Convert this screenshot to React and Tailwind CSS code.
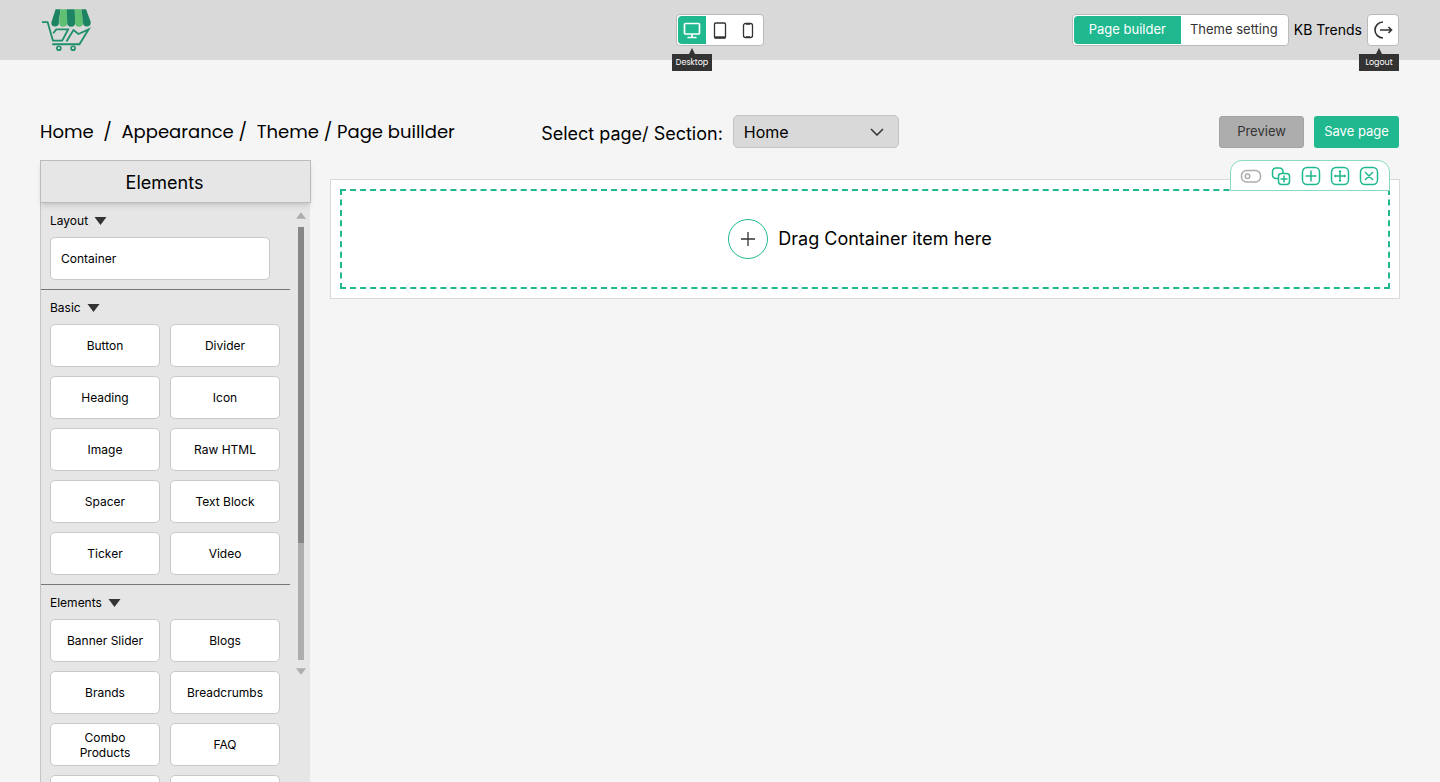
import React, { useState } from 'react';
import clsx from 'clsx';

const sections = [
  {
    title: 'Basic',
    items: ['Button', 'Divider', 'Heading', 'Icon', 'Image', 'Raw HTML', 'Spacer', 'Text Block', 'Ticker', 'Video'],
  },
  {
    title: 'Elements',
    items: ['Banner Slider', 'Blogs', 'Brands', 'Breadcrumbs', 'Combo Products', 'FAQ', '', ''],
  },
];

const scroll = { track: 76, thumb: 73 };

function Logo() {
  return (
    <svg viewBox="34 24 154 132" className="h-11 w-[51px]" fill="none" aria-label="Store logo">
      <path d="M78 27h15l-5 38v3a11.500 11.500 0 0 1-23 0z" fill="#1c8463" />
      <path d="M93 27h20v41a12 12 0 0 1-24 0v-3z" fill="#5fbf73" />
      <path d="M112 27h24l1 41a12 12 0 0 1-24 0z" fill="#1c8463" />
      <path d="M136 27h20l5 38v3a12 12 0 0 1-24 0z" fill="#5fbf73" />
      <path d="M156 27h14l14 38v3a11.500 11.500 0 0 1-23 0z" fill="#1c8463" />
      <path
        d="M37 66h17l16 56h28l18-34H80l-9 12M111 125l21-35 15 12 31-14-28 45H68"
        stroke="#1f8f6c"
        strokeWidth="5.500"
      />
      <circle cx="88" cy="145" r="6" stroke="#1f8f6c" strokeWidth="5" />
      <circle cx="131" cy="145" r="6" stroke="#1f8f6c" strokeWidth="5" />
    </svg>
  );
}

function DesktopIcon() {
  return (
    <svg viewBox="0 0 18 18" className="size-[18px]" fill="none" stroke="currentColor" strokeWidth="1.700">
      <rect x="1.500" y="2.500" width="15" height="10.500" rx="1" />
      <path d="M9 13v3.500M4.500 16.500h9" />
    </svg>
  );
}

function TabletIcon() {
  return (
    <svg viewBox="0 0 18 18" className="size-[18px]" fill="none" stroke="currentColor">
      <rect x="3.500" y="2" width="11" height="15" rx="1" strokeWidth="1.300" />
      <path d="M3.500 16.300h11" strokeWidth="2" />
    </svg>
  );
}

function PhoneIcon() {
  return (
    <svg viewBox="0 0 18 18" className="size-[18px]" fill="none" stroke="currentColor" strokeWidth="1.300">
      <rect x="4.500" y="2.500" width="9" height="14" rx="2" />
      <path d="M7 3h4M7 16h4" strokeWidth="1.600" />
    </svg>
  );
}

function LogoutIcon() {
  return (
    <svg viewBox="0 0 20 20" className="size-5" fill="none" stroke="currentColor" strokeWidth="1.600">
      <path d="M10 2a8 8 0 0 0 0 16" />
      <path d="M7 10h11.500M15.500 7l3 3-3 3" />
    </svg>
  );
}

function Tooltip({ children, className }) {
  return (
    <span
      role="tooltip"
      className={clsx('absolute z-10 flex flex-col items-center font-[Poppins,Inter,sans-serif] text-[8px] leading-[17px] text-white', className)}
    >
      <svg viewBox="0 0 6 6" className="size-[6px]" fill="#333">
        <path d="M3 0l3 6H0z" />
      </svg>
      <span className="h-[17px] w-10 bg-[#333] text-center">{children}</span>
    </span>
  );
}

const devices = [
  { id: 'Desktop', Icon: DesktopIcon },
  { id: 'Tablet', Icon: TabletIcon },
  { id: 'Mobile', Icon: PhoneIcon },
];

function Header() {
  const [device, setDevice] = useState('Desktop');

  return (
    <header className="grid h-15 shrink-0 grid-cols-[1fr_auto_1fr] items-center bg-[#d9d9d9] px-10">
      <a href="#" className="ml-px justify-self-start">
        <Logo />
      </a>

      <div className="relative flex h-8 items-center rounded border border-[#bbb] bg-white px-px">
        {devices.map(({ id, Icon }) => (
          <button
            key={id}
            aria-label={id}
            onClick={() => setDevice(id)}
            className={clsx(
              'flex h-7 w-7 items-center justify-center',
              device === id ? 'rounded-l bg-[#1fb88f] text-white' : 'text-[#333]'
            )}
          >
            <Icon />
          </button>
        ))}
        <Tooltip className="-left-[5px] top-[33px]">Desktop</Tooltip>
      </div>

      <div className="mr-px flex items-center gap-[5px] justify-self-end">
        <div className="flex h-8 items-center rounded border border-[#bbb] bg-white px-px text-[13px]">
          <button className="h-7 w-[107px] rounded-l bg-[#1fb88f] text-white">Page builder</button>
          <button className="h-7 w-[106px] text-[#333]">Theme setting</button>
        </div>
        <span className="text-sm">KB Trends</span>
        <div className="relative">
          <button
            aria-label="Log out"
            className="flex size-8 items-center justify-center rounded border border-[#bbb] bg-white text-[#333]"
          >
            <LogoutIcon />
          </button>
          <Tooltip className="right-0 top-[34px]">Logout</Tooltip>
        </div>
      </div>
    </header>
  );
}

function PageBar() {
  return (
    <div className="grid grid-cols-[1fr_auto_1fr] items-center">
      <nav className="font-[Poppins,Inter,sans-serif] text-lg whitespace-pre">
        <a href="#">Home</a>
        {'  /  '}
        <a href="#">Appearance</a>
        {' /  '}
        <a href="#">Theme</a>
        {' / '}
        <a href="#">Page buillder</a>
      </nav>

      <div className="flex items-center gap-[10px]">
        <label htmlFor="page" className="pt-1 text-lg">
          Select page/ Section:
        </label>
        <div className="relative">
          <select
            id="page"
            className="h-[33px] w-[166px] appearance-none rounded-[5px] border border-[#c4c4c4] bg-[#d9d9d9] px-[10px] text-base"
          >
            <option>Home</option>
          </select>
          <svg
            viewBox="0 0 14 8"
            className="pointer-events-none absolute top-[13px] right-[15px] h-2 w-[14px]"
            fill="none"
            stroke="#333"
            strokeWidth="1.500"
          >
            <path d="M1 1l6 6 6-6" />
          </svg>
        </div>
      </div>

      <div className="mr-px flex gap-[10px] justify-self-end text-[13px]">
        <button className="h-8 w-[85px] rounded-[3px] border border-[#a3a3a3] bg-[#adadad] text-[#333]">Preview</button>
        <button className="h-8 w-[85px] rounded-[3px] bg-[#1fb88f] text-white">Save page</button>
      </div>
    </div>
  );
}

function Caret({ up, className }) {
  return (
    <svg viewBox="0 0 12 8" className={className} fill="currentColor">
      <path d={up ? 'M6 0l6 8H0z' : 'M0 0h12L6 8z'} />
    </svg>
  );
}

function SectionTitle({ children }) {
  return (
    <button className="flex h-[34px] items-center gap-[6px] pt-[2px]">
      {children}
      <Caret className="h-2 w-[13px] text-[#333]" />
    </button>
  );
}

function Sidebar() {
  return (
    <aside className="flex w-[271px] shrink-0 flex-col text-[12px]">
      <h2 className="z-10 h-[43px] border border-[#bbb] bg-[#e6e6e6] pr-[22px] text-center text-lg leading-[43px] shadow-md">
        Elements
      </h2>
      <div className="mr-px flex min-h-0 flex-1 justify-between overflow-hidden border-l border-[#c4c4c4] bg-[#e6e6e6]">
        <div className="w-[249px]">
          <section className="border-b border-[#777] pb-[9px] pl-[9px]">
            <SectionTitle>Layout</SectionTitle>
            <button className="h-[43px] w-[220px] rounded-[5px] border border-[#c9c9c9] bg-white px-[10px] text-left">
              Container
            </button>
          </section>
          {sections.map((section) => (
            <section key={section.title} className="border-b border-[#777] pb-[9px] pl-[9px]">
              <SectionTitle>{section.title}</SectionTitle>
              <div className="grid grid-cols-[110px_110px] gap-x-[10px] gap-y-[9px]">
                {section.items.map((item, idx) => (
                  <button key={idx} className="h-[43px] rounded-[5px] border border-[#c9c9c9] bg-white px-3 leading-[15px]">
                    {item}
                  </button>
                ))}
              </div>
            </section>
          ))}
        </div>

        {/* Scroll bar */}
        <div className="flex w-[19px] flex-col items-center gap-2 pt-[9px] text-[#adadad]">
          <Caret up className="h-[7px] w-[10px] shrink-0" />
          <div className="w-[6px] shrink-0 bg-[#adadad]" style={{ height: `${scroll.track}%` }}>
            <div className="bg-[#878787]" style={{ height: `${scroll.thumb}%` }} />
          </div>
          <Caret className="h-[7px] w-[10px] shrink-0" />
        </div>
      </div>
    </aside>
  );
}

const box = 'M6 1.500h8A4.500 4.500 0 0 1 18.500 6v8a4.500 4.500 0 0 1-4.500 4.500H6A4.500 4.500 0 0 1 1.500 14V6A4.500 4.500 0 0 1 6 1.500z';

const tools = [
  {
    label: 'Duplicate',
    path: 'M7 12.500H5A3.500 3.500 0 0 1 1.500 9V5.500A3.500 3.500 0 0 1 5 2h3.500A3.500 3.500 0 0 1 12 5.500V7M10.500 7.500h5a3 3 0 0 1 3 3v5a3 3 0 0 1-3 3h-5a3 3 0 0 1-3-3v-5a3 3 0 0 1 3-3zM13 9.500v7M9.500 13h7',
  },
  { label: 'Add', path: `${box}M10 4.500v11M4.500 10h11` },
  {
    label: 'Move',
    path: `${box}M10 5v3.500M10 11.500V15M5 10h3.500M11.500 10H15M10 8.500v3M8.500 10h3M9 6l1-1 1 1M9 14l1 1 1-1M6 9l-1 1 1 1M14 9l1 1-1 1`,
  },
  { label: 'Remove', path: `${box}M6 6l8 8M14 6l-8 8` },
];

function Toolbar() {
  return (
    <div className="absolute -top-5 right-[9px] flex h-[31px] w-40 items-center justify-between rounded-t-xl border border-[#8bd9c2] bg-white pr-[10px] pl-[9px] text-[#1fb88f]">
      <button aria-label="Toggle">
        <svg viewBox="0 0 22 20" className="h-5 w-[22px]" fill="none" stroke="#adadad" strokeWidth="1.500">
          <rect x="1.500" y="4.500" width="19" height="11.500" rx="5" />
          <circle cx="7.500" cy="10.300" r="2.300" />
        </svg>
      </button>
      {tools.map((tool) => (
        <button key={tool.label} aria-label={tool.label}>
          <svg viewBox="0 0 20 20" className="size-5" fill="none" stroke="currentColor" strokeWidth="1.500">
            <path d={tool.path} />
          </svg>
        </button>
      ))}
    </div>
  );
}

function Canvas() {
  return (
    <main className="relative mt-[19px] flex-1 self-start border border-[#d9d9d9] bg-white p-[9px]">
      <div className="flex h-[100px] items-center justify-center gap-[10px] border-2 border-dashed border-[#1fb88f] pr-[10px] text-lg">
        <button
          aria-label="Add container"
          className="flex size-10 items-center justify-center rounded-full border border-[#1fb88f]"
        >
          <svg viewBox="0 0 14 14" className="size-[14px]" stroke="#333" strokeWidth="1.300">
            <path d="M7 0v14M0 7h14" />
          </svg>
        </button>
        <span>Drag Container item here</span>
      </div>
      <Toolbar />
    </main>
  );
}

export default function App() {
  return (
    <div className="flex h-screen flex-col overflow-hidden bg-[#f5f5f5] font-[Inter,sans-serif] text-black">
      <Header />
      <div className="flex min-h-0 flex-1 flex-col gap-3 px-10 pt-[55px]">
        <PageBar />
        <div className="flex min-h-0 flex-1 gap-[19px]">
          <Sidebar />
          <Canvas />
        </div>
      </div>
    </div>
  );
}
